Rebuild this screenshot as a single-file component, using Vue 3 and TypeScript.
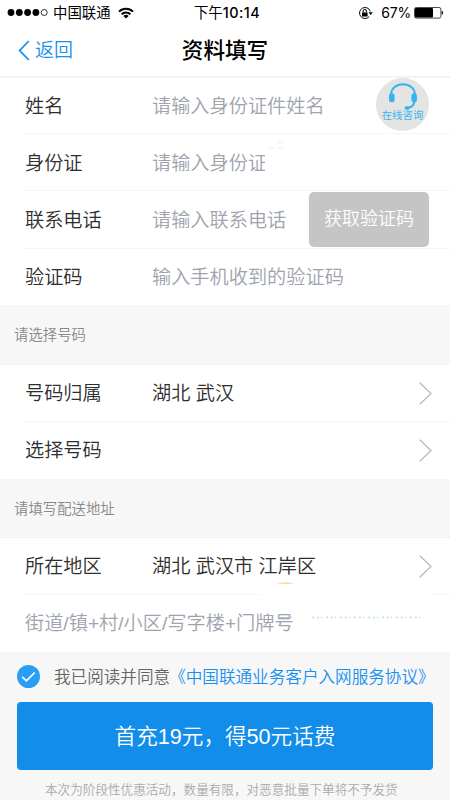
<script setup lang="ts">
import { ref } from 'vue'

interface Field {
  label: string
  placeholder: string
  kind: string
}

const fields: Field[] = [
  { label: '姓名', placeholder: '请输入身份证件姓名', kind: 'name' },
  { label: '身份证', placeholder: '请输入身份证', kind: 'idcard' },
  { label: '联系电话', placeholder: '请输入联系电话', kind: 'phone' },
  { label: '验证码', placeholder: '输入手机收到的验证码', kind: 'code' },
]

const numberRows = [
  { label: '号码归属', value: '湖北 武汉' },
  { label: '选择号码', value: '' },
]

const agreed = ref(true)
</script>

<template>
  <div class="page">
    <div class="status">
      <div class="carrier">
        <svg class="signal" width="41" height="9" viewBox="0 0 41 9">
          <circle cx="4" cy="4.5" r="3.4" />
          <circle cx="12.3" cy="4.5" r="3.4" />
          <circle cx="20.6" cy="4.5" r="3.4" />
          <circle cx="28.9" cy="4.5" r="3.4" />
          <circle class="hollow" cx="37.2" cy="4.5" r="3" />
        </svg>
        <span>中国联通</span>
        <svg class="wifi" width="16" height="12" viewBox="0 0 16 12">
          <path d="M1 4.6A10 10 0 0 1 15 4.6M3.6 7.2A6.3 6.3 0 0 1 12.4 7.2" />
          <path class="solid" d="M8 11.6 5.4 9A3.7 3.7 0 0 1 10.6 9Z" />
        </svg>
      </div>
      <div class="clock">下午<b>10:14</b></div>
      <div class="power">
        <svg width="15" height="14" viewBox="0 0 15 14">
          <path class="ring" d="M11.2 10.6A5.5 5.5 0 1 1 12.3 5.4" />
          <path d="M10.5 6.2h4.3l-2.1 2.9zM4 6.4h5.6v4H4z" />
          <path class="shackle" d="M5.2 6.6V5a1.6 1.6 0 0 1 3.2 0v1.6" />
        </svg>
        <span class="percent">67%</span>
        <svg width="30" height="12" viewBox="0 0 30 12">
          <rect class="case" x=".5" y=".5" width="26.4" height="10.6" rx="1.8" />
          <rect x="1" y="1" width="18" height="9.6" rx="1" />
          <path d="M27.7 3.8c1.8.5 1.8 3.5 0 4z" />
        </svg>
      </div>
    </div>

    <header class="nav">
      <button class="back" type="button">
        <svg width="12" height="21" viewBox="0 0 12 21"><path d="M10.8 1 1.7 10.5 10.8 20" /></svg>
        <span>返回</span>
      </button>
      <h1>资料填写</h1>
    </header>

    <section class="group">
      <div v-for="field in fields" :key="field.kind" class="row" :class="field.kind">
        <span class="label">{{ field.label }}</span>
        <span class="placeholder">{{ field.placeholder }}</span>
        <button v-if="field.kind === 'phone'" class="send" type="button">获取验证码</button>
        <div v-if="field.kind === 'name'" class="service">
          <svg width="30" height="27" viewBox="0 0 30 27">
            <path class="band" d="M3.2 12V11C3.2 5.2 8.3 1.2 15 1.2S26.8 5.2 26.8 11v5.5c0 5-3.3 8-7.8 8.8" />
            <rect x="1" y="10.3" width="5.6" height="9" rx="2.4" />
            <rect x="23.4" y="10.3" width="5.6" height="9" rx="2.4" />
            <rect x="16.5" y="23.2" width="5.2" height="3.6" rx="1.8" />
          </svg>
          <span>在线咨询</span>
        </div>
        <svg v-if="field.kind === 'idcard'" class="smudge" width="30" height="45" viewBox="0 0 30 45">
          <path class="fade" d="M0 6h30v34H0z" />
          <path class="warm" d="M13 4.5h4.5M14 10h3.5" />
          <path class="gray" d="M4 10h6M22 23.6h2" />
        </svg>
      </div>
    </section>

    <h2>请选择号码</h2>

    <section class="group">
      <div v-for="row in numberRows" :key="row.label" class="row">
        <span class="label">{{ row.label }}</span>
        <span class="value">{{ row.value }}</span>
        <svg class="chevron" width="13" height="23" viewBox="0 0 13 23"><path d="M.8.8 12 11.5.8 22.2" /></svg>
      </div>
    </section>

    <h2 class="address">请填写配送地址</h2>

    <section class="group">
      <div class="row">
        <span class="label">所在地区</span>
        <span class="value">湖北 武汉市 江岸区</span>
        <svg class="chevron" width="13" height="23" viewBox="0 0 13 23"><path d="M.8.8 12 11.5.8 22.2" /></svg>
      </div>
      <div class="row street">
        <span class="placeholder">街道/镇+村/小区/写字楼+门牌号</span>
        <svg class="traces" width="171" height="38" viewBox="0 0 171 38">
          <path class="fade" d="M0 3h171v29H0z" />
          <path class="orange" d="M16 3Q24.5-1 33 3z" />
          <path class="stripe" d="M18 36.5h13" />
          <path class="dots" d="M51 36.5h112" />
        </svg>
      </div>
    </section>

    <footer>
      <label class="agree" @click="agreed = !agreed">
        <svg width="23" height="23" viewBox="0 0 23 23">
          <circle cx="11.5" cy="11.5" r="11.5" />
          <path v-if="agreed" d="m5.2 11.8 4.2 4.1 8.3-8.4" />
        </svg>
        <span class="terms">我已阅读并同意<a>《中国联通业务客户入网服务协议》</a></span>
      </label>
      <button class="submit" type="button">首充19元，得50元话费</button>
      <p>本次为阶段性优惠活动，数量有限，对恶意批量下单将不予发货</p>
    </footer>
  </div>
</template>

<style>
body {
  margin: 0;
  overflow: hidden;
}
</style>

<style scoped>
.page {
  width: 450px;
  height: 800px;
  overflow: hidden;
  background: #f7f7f7;
  color: #2e2e2e;
  font-family: "Liberation Sans", "Noto Sans CJK SC", sans-serif;
  font-weight: 350;
}
* {
  box-sizing: border-box;
}
svg {
  display: block;
  flex: none;
}
button {
  border: 0;
  padding: 0;
  font: inherit;
}
h1,
h2,
p {
  margin: 0;
  font-weight: 350;
}
.status {
  display: grid;
  grid-template-columns: 1fr auto 1fr;
  align-items: center;
  height: 25px;
  padding: 0 6px 0 7px;
  background: #fff;
  color: #000;
  font-size: 14.4px;
  font-weight: 400;
  line-height: 24px;
}
.carrier,
.power {
  display: flex;
  align-items: center;
}
.signal {
  margin-right: 5px;
}
.hollow {
  fill: none;
  stroke: #000;
  stroke-width: 0.8;
}
.wifi {
  margin-left: 7px;
  fill: none;
  stroke: #000;
  stroke-width: 2;
}
.solid {
  fill: #000;
  stroke: none;
}
.clock {
  padding-left: 3px;
}
.clock b {
  font-family: Inter, sans-serif;
  font-size: 14.4px;
  font-weight: 500;
  letter-spacing: 0.45px;
}
.power {
  justify-content: flex-end;
}
.ring,
.shackle {
  fill: none;
  stroke: #000;
}
.percent {
  margin: 0 3px 0 8px;
  font-family: Inter, sans-serif;
  font-size: 14px;
  letter-spacing: -0.2px;
}
.case {
  fill: none;
  stroke: #000;
  stroke-width: 0.7;
}
.nav {
  position: relative;
  display: flex;
  align-items: center;
  justify-content: center;
  height: 53px;
  border-bottom: 2px solid #f3f3f3;
  background: #fff;
}
.nav h1 {
  color: #000;
  font-size: 21.6px;
  font-weight: 500;
  line-height: 32px;
}
.back {
  position: absolute;
  left: 18px;
  top: 10px;
  display: flex;
  align-items: center;
  gap: 5px;
  background: none;
  color: #1890ee;
  font-size: 19px;
  line-height: 32px;
}
.back svg {
  margin-top: -2px;
}
.back path {
  fill: none;
  stroke: #1890ee;
  stroke-width: 1.8;
}
.group {
  background: #fff;
}
.row {
  position: relative;
  display: flex;
  align-items: center;
  height: 57px;
  margin-left: 25px;
  padding: 2px 18px 0 0;
  border-bottom: 1px solid #f5f5f5;
  font-size: 19.2px;
  line-height: 30px;
  white-space: nowrap;
}
.row:last-child {
  border-bottom-color: transparent;
}
.row.name {
  height: 56px;
}
.row.phone {
  height: 58px;
}
.row.code {
  height: 56px;
}
.row.idcard,
.row.phone,
.row.code {
  padding-top: 3px;
}
.label {
  width: 127px;
}
.placeholder {
  color: #9ea3ad;
}
.send {
  width: 120px;
  height: 55px;
  margin: -4px 3px 0 auto;
  border-radius: 5px;
  background: #c5c5c5;
  color: #fff;
  font-size: 18px;
}
.service {
  position: absolute;
  right: 21px;
  top: 0;
  display: flex;
  flex-direction: column;
  align-items: center;
  width: 53px;
  height: 53px;
  padding-top: 5px;
  border-radius: 50%;
  background: #e4e4e4;
  color: #35b5ee;
  font-size: 10.4px;
  font-weight: 400;
  line-height: 12px;
}
.service svg {
  fill: #35b5ee;
}
.service .band {
  fill: none;
  stroke: #35b5ee;
  stroke-width: 2;
}
.smudge {
  position: absolute;
  left: 240px;
  top: 4px;
}
.fade {
  fill: #fff;
}
.warm {
  stroke: #fbe5dc;
}
.gray {
  stroke: #eee;
}
h2 {
  display: flex;
  align-items: center;
  height: 60px;
  padding: 0 0 2px 14px;
  border-bottom: 1px solid #f2f2f2;
  color: #888;
  font-size: 14.4px;
}
h2.address {
  height: 59px;
}
.chevron {
  margin: -2px 0 0 auto;
  fill: none;
  stroke: #b8b8b8;
  stroke-width: 1.2;
}
.traces {
  position: absolute;
  left: 236px;
  top: -14px;
  fill: none;
}
.orange {
  fill: #fcdcae;
}
.stripe {
  stroke: #a9c9e6;
}
.dots {
  stroke: #b5dcf8;
  stroke-width: 1.4;
  stroke-dasharray: 2 3 2 2 1 4;
}
footer {
  padding: 9px 17px 0;
}
.agree {
  display: flex;
  align-items: center;
  gap: 14px;
  height: 32px;
  color: #666;
  font-size: 16.6px;
  white-space: nowrap;
}
.agree svg {
  margin-top: -1px;
}
.terms {
  flex: none;
  padding-bottom: 2px;
}
.agree a {
  margin-left: -1px;
  color: #1890ee;
}
.agree circle {
  fill: #2a9df7;
}
.agree path {
  fill: none;
  stroke: #fff;
  stroke-width: 1.7;
}
.submit {
  display: block;
  width: 416px;
  height: 68px;
  margin-top: 9px;
  padding-bottom: 4px;
  border-radius: 4px;
  background: #128dea;
  color: #fff;
  font-size: 21.6px;
}
footer p {
  margin: 11px 0 0 28px;
  color: #aaa;
  font-size: 12.6px;
  line-height: 19px;
  white-space: nowrap;
}
</style>
